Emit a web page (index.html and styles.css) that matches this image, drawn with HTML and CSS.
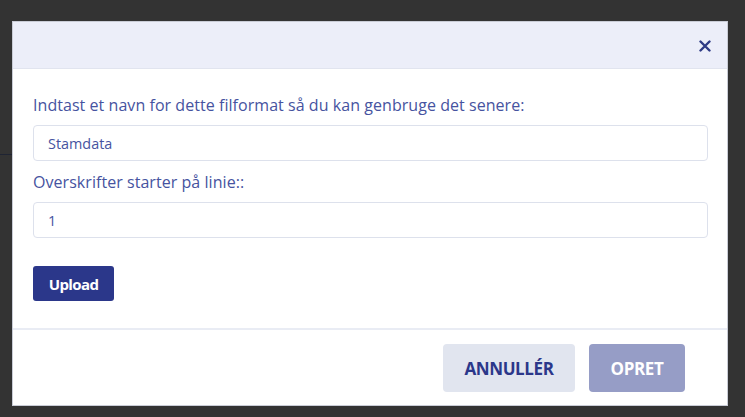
FILE: index.html
```html
<!DOCTYPE html>
<html lang="da">
<head>
  <meta charset="UTF-8">
  <meta name="viewport" content="width=device-width, initial-scale=1.0">
  <title>Filformat</title>
  <link rel="stylesheet" href="styles.css">
</head>
<body>
  <div class="backdrop-line"></div>
  <div class="modal">
    <div class="modal-header">
      <button class="close" aria-label="Luk">
        <svg width="12" height="12" viewBox="0 0 12 12"><path d="M1.5 1.5L10.5 10.5M10.5 1.5L1.5 10.5" stroke="#2e3a85" stroke-width="2.4" stroke-linecap="round"/></svg>
      </button>
    </div>

    <div class="modal-body">
      <label for="name">Indtast et navn for dette filformat så du kan genbruge det senere:</label>
      <input type="text" id="name" value="Stamdata">

      <label for="line">Overskrifter starter på linie::</label>
      <input type="text" id="line" value="1">

      <button class="btn-upload">Upload</button>
    </div>

    <div class="modal-footer">
      <button class="btn btn-cancel">ANNULLÉR</button>
      <button class="btn btn-create">OPRET</button>
    </div>
  </div>
</body>
</html>
```

FILE: styles.css
```css
body {
  margin: 0;
  background-color: #333333;
  font-family: 'Open Sans', sans-serif;
  color: #4653a0;
  height: 417px;
  overflow: hidden;
}
.backdrop-line {
  position: absolute;
  left: 0;
  top: 154px;
  width: 12px;
  height: 1px;
  background: #1f2433;
}
.modal {
  margin: 21px 0 0 12px;
  width: 716px;
  height: 385px;
  background: white;
  border: 1px solid #c9ccd6;
  box-sizing: border-box;
  display: flex;
  flex-direction: column;
}
.modal-header {
  height: 47px;
  background-color: #eceef9;
  border-bottom: 1px solid #e1e4ef;
  display: flex;
  align-items: center;
  justify-content: flex-end;
  padding-right: 12px;
  padding-top: 1px;
  box-sizing: border-box;
  flex-shrink: 0;
}
.close {
  background: none;
  border: none;
  padding: 4px;
  cursor: pointer;
  display: flex;
}
.modal-body {
  padding: 25px 19px 0 20px;
  flex: 1;
  display: flex;
  flex-direction: column;
  align-items: flex-start;
}
label {
  font-size: 16px;
  line-height: 22px;
  margin-bottom: 9px;
  letter-spacing: 0.05px;
}
input[type="text"] {
  width: 100%;
  height: 36px;
  padding: 0 14px;
  border: 1px solid #dde1ec;
  border-radius: 4px;
  font-family: 'Open Sans', sans-serif;
  font-size: 14.4px;
  color: #4653a0;
  box-sizing: border-box;
  margin-bottom: 10px;
}
.btn-upload {
  margin-top: 18px;
  background-color: #2b378a;
  color: white;
  border: none;
  border-radius: 3px;
  width: 81px;
  height: 35px;
  font-family: 'Open Sans', sans-serif;
  font-weight: 700;
  font-size: 15px;
  letter-spacing: -0.6px;
  cursor: pointer;
}
.modal-footer {
  height: 77px;
  border-top: 2px solid #e9ecf4;
  display: flex;
  justify-content: flex-end;
  align-items: flex-start;
  gap: 14px;
  padding: 14px 42px 0 0;
  box-sizing: border-box;
  flex-shrink: 0;
}
.btn {
  height: 48px;
  border: none;
  border-radius: 4px;
  font-family: 'Open Sans', sans-serif;
  font-weight: 700;
  font-size: 17px;
  letter-spacing: -0.4px;
  cursor: pointer;
}
.btn-cancel {
  width: 132px;
  background-color: #e1e5ef;
  color: #2b378a;
}
.btn-create {
  width: 96px;
  background-color: #969dc6;
  color: white;
}
```
